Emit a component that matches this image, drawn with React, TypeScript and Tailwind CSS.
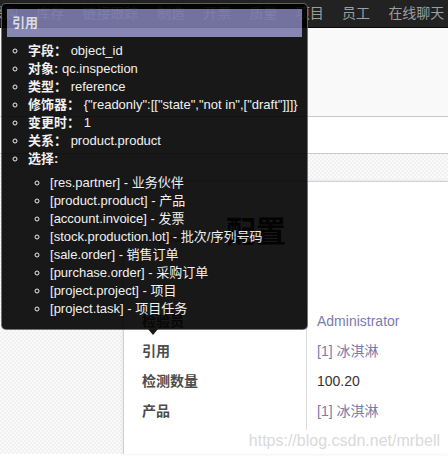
const NAV = ['采购', '库存', '链接跟踪', '制造', '开票', '质量', '项目', '员工', '在线聊天'];

const SELECTION: [string, string][] = [
  ['res.partner', '业务伙伴'],
  ['product.product', '产品'],
  ['account.invoice', '发票'],
  ['stock.production.lot', '批次/序列号码'],
  ['sale.order', '销售订单'],
  ['purchase.order', '采购订单'],
  ['project.project', '项目'],
  ['project.task', '项目任务'],
];

const FIELDS: { label: string; value: string; link?: boolean }[] = [
  { label: '检验员', value: 'Administrator', link: true },
  { label: '引用', value: '[1] 冰淇淋', link: true },
  { label: '检测数量', value: '100.20' },
  { label: '产品', value: '[1] 冰淇淋', link: true },
];

const checker =
  'bg-[#f7f7f7] bg-[image:repeating-conic-gradient(#f1f1f1_0%_25%,#fafafa_0%_50%)] bg-[length:4px_4px]';

function FieldTooltip() {
  return (
    <div className="absolute left-[1px] top-[3px] w-[307px] rounded-[5px] border border-white/40 bg-black p-[5px] pb-[11px] text-[13px] leading-[18px] text-[#f0f0f0] opacity-90">
      <div className="flex h-[28px] items-center bg-[#7c7bad] px-[5px] font-bold">引用</div>
      <ul className="mt-[5px] list-[circle] pl-[21px]">
        <li>
          <b>字段：</b> object_id
        </li>
        <li>
          <b>对象:</b> qc.inspection
        </li>
        <li>
          <b>类型：</b> reference
        </li>
        <li>
          <b>修饰器：</b> {'{"readonly":[["state","not in",["draft"]]]}'}
        </li>
        <li>
          <b>变更时：</b> 1
        </li>
        <li>
          <b>关系：</b> product.product
        </li>
        <li>
          <b>选择:</b>
          <ul className="mt-[6px] list-[circle] pl-[22px]">
            {SELECTION.map(([model, name]) => (
              <li key={model}>
                [{model}] - {name}
              </li>
            ))}
          </ul>
        </li>
      </ul>
      <div className="absolute -bottom-[6px] left-[146px] h-0 w-0 border-x-[5px] border-t-[6px] border-x-transparent border-t-black" />
    </div>
  );
}

export default function App() {
  return (
    <div className="relative h-[456px] w-[448px] overflow-hidden bg-white font-['Liberation_Sans','Noto_Sans_CJK_SC',sans-serif]">
      {/* top menu */}
      <nav className="flex h-[28px] items-center overflow-hidden whitespace-nowrap border-b border-[#080808] bg-[#222] text-[14px] text-[#9d9d9d]">
        <div className="-ml-[10px] flex gap-[18.3px]">
          {NAV.map((n) => (
            <span key={n}>{n}</span>
          ))}
        </div>
      </nav>

      {/* control panel + status header */}
      <div className="h-[89px] border-b border-[#cacaca] bg-[#f9f9f9]" />
      <div className="h-[37px] border-b border-[#cacaca] bg-white" />

      {/* sheet background */}
      <div className={`h-[300px] pt-[27px] ${checker}`}>
        <div className="ml-[123px] h-full border-l border-t border-[#cfcfdc] bg-white pt-[34px] shadow-[0_0_4px_rgba(0,0,0,0.08)]">
          <div className="flex items-baseline pl-[17px]">
            <span className="w-[85px] text-[13px] text-[#777]">Inspection</span>
            <span className="text-[30px] font-bold leading-[32px] text-[#222]">配置</span>
          </div>

          <div className="mt-[58px] grid grid-cols-[182px_1fr] text-[14px]">
            <div className="flex flex-col pl-[18px] font-bold text-[#4c4c4c]">
              {FIELDS.map((f) => (
                <div key={f.label} className="flex h-[30px] items-center">
                  {f.label}
                </div>
              ))}
            </div>
            <div className="flex flex-col border-l border-[#ddd] pb-[4px] pl-[10px]">
              {FIELDS.map((f) => (
                <div
                  key={f.label}
                  className={`flex h-[30px] items-center ${f.link ? 'text-[#7c7bad]' : 'text-[#333]'}`}
                >
                  {f.value}
                </div>
              ))}
            </div>
          </div>
        </div>
      </div>

      <FieldTooltip />

      <span className="absolute right-[8px] top-[429px] text-[16px] text-[#dadada]">https://blog.csdn.net/mrbell</span>
    </div>
  );
}
